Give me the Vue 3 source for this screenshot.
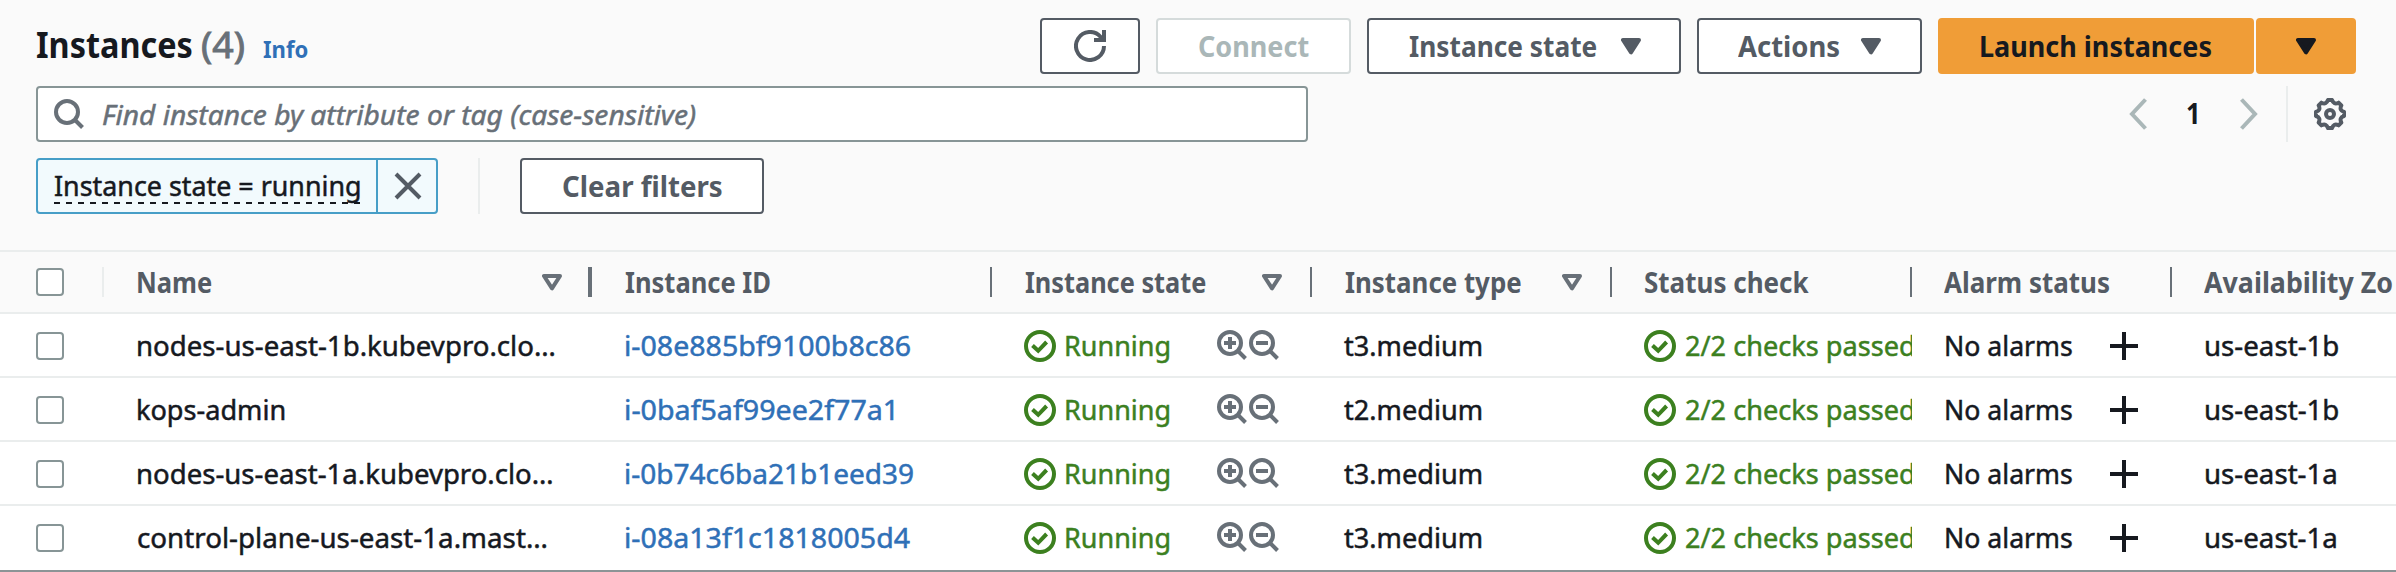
<script setup>
// Fits a label to a given ink width by condensing it horizontally.
const vFit = {
  mounted(el, { value }) {
    const cs = getComputedStyle(el)
    const ctx = document.createElement('canvas').getContext('2d')
    ctx.font = `${cs.fontStyle} ${cs.fontWeight} ${cs.fontSize} ${cs.fontFamily}`
    const m = ctx.measureText(el.textContent)
    const scale = value / (m.actualBoundingBoxRight + m.actualBoundingBoxLeft)
    const bearing = -m.actualBoundingBoxLeft * scale
    el.style.transform = `scaleX(${scale})`
    el.style.marginLeft = `${-bearing}px`
    el.style.marginRight = `${value - m.width + bearing}px`
  },
}

const columns = [
  { key: 'name', label: 'Name', width: 73.8, filter: true, active: true },
  { key: 'id', label: 'Instance ID', width: 144.5 },
  { key: 'state', label: 'Instance state', width: 180.7, filter: true },
  { key: 'type', label: 'Instance type', width: 176, filter: true },
  { key: 'status', label: 'Status check', width: 164.3 },
  { key: 'alarm', label: 'Alarm status', width: 165 },
  { key: 'zone', label: 'Availability Zo', width: 188.5, last: true },
]

const rows = [
  { name: 'nodes-us-east-1b.kubevpro.clo…', nw: 416.7, id: 'i-08e885bf9100b8c86', iw: 284, type: 't3.medium', zone: 'us-east-1b', zw: 132.2 },
  { name: 'kops-admin', nw: 147, id: 'i-0baf5af99ee2f77a1', iw: 267, type: 't2.medium', zone: 'us-east-1b', zw: 132.2 },
  { name: 'nodes-us-east-1a.kubevpro.clo…', nw: 414.5, id: 'i-0b74c6ba21b1eed39', iw: 287, type: 't3.medium', zone: 'us-east-1a', zw: 130.2 },
  { name: 'control-plane-us-east-1a.mast…', nw: 408.7, id: 'i-08a13f1c1818005d4', iw: 284, type: 't3.medium', zone: 'us-east-1a', zw: 130.2 },
]

const polar = (r, deg) => {
  const a = (deg * Math.PI) / 180
  return `${(16 + r * Math.cos(a)).toFixed(2)} ${(16 + r * Math.sin(a)).toFixed(2)}`
}
let gear = `M${polar(14.2, -8)}`
for (let k = 0; k < 8; k++) {
  const a = k * 45
  gear += ` L${polar(14.2, a + 8)} Q${polar(9.6, a + 22.5)} ${polar(14.2, a + 37)}`
}
gear += 'Z'
</script>

<template>
  <div class="panel">
    <header class="top">
      <div class="title-row">
        <h1 class="title"><span v-fit="155" class="t">Instances</span><span v-fit="42" class="t count">(4)</span></h1>
        <a class="info"><span v-fit="44.4" class="t">Info</span></a>
        <div class="actions">
          <button class="btn refresh">
            <svg width="32" height="32" viewBox="0 0 32 32"><path d="M30 16A14 14 0 1 1 26.5 6.7L28 10" /><path d="M30 0V10H20" /></svg>
          </button>
          <button class="btn connect"><span v-fit="110" class="t">Connect</span></button>
          <button class="btn state">
            <span v-fit="187.6" class="t">Instance state</span>
            <svg class="caret" width="20" height="17" viewBox="0 0 20 17"><path d="M2 2H18L10 14.4Z" /></svg>
          </button>
          <button class="btn acts">
            <span v-fit="101" class="t">Actions</span>
            <svg class="caret" width="20" height="17" viewBox="0 0 20 17"><path d="M2 2H18L10 14.4Z" /></svg>
          </button>
          <button class="btn primary launch"><span v-fit="230" class="t">Launch instances</span></button>
          <button class="btn primary more">
            <svg class="caret" width="20" height="17" viewBox="0 0 20 17"><path d="M2 2H18L10 14.4Z" /></svg>
          </button>
        </div>
      </div>

      <div class="search-row">
        <div class="search">
          <svg width="30" height="30" viewBox="0 0 30 30"><circle cx="13" cy="13" r="11" /><path d="M20.5 20.5L28.5 28.5" /></svg>
          <span v-fit="592" class="t">Find instance by attribute or tag (case-sensitive)</span>
        </div>
        <div class="pager">
          <svg width="18" height="32" viewBox="0 0 18 32"><path d="M16.5 1.5L3 16L16.5 30.5" /></svg>
          <span v-fit="10" class="t page">1</span>
          <svg width="18" height="32" viewBox="0 0 18 32"><path d="M1.5 1.5L15 16L1.5 30.5" /></svg>
          <i class="rule"></i>
          <svg class="gear" width="32" height="32" viewBox="0 0 32 32"><path :d="gear" /><circle cx="16" cy="16" r="4" /></svg>
        </div>
      </div>

      <div class="filter-row">
        <div class="token">
          <div class="token-label">
            <span v-fit="304.5" class="t">Instance state = running</span>
            <svg class="dashes" width="306" height="2" viewBox="0 0 306 2"><path d="M0 1H306" /></svg>
          </div>
          <div class="token-close"><svg width="28" height="28" viewBox="0 0 28 28"><path d="M2 2L26 26M26 2L2 26" /></svg></div>
        </div>
        <i class="rule"></i>
        <button class="btn clear"><span v-fit="158.7" class="t">Clear filters</span></button>
      </div>
    </header>

    <div class="grid head">
      <div class="cell select"><i class="box"></i><i class="rule short"></i></div>
      <div v-for="c in columns" :key="c.key" class="cell" :class="c.key">
        <span v-fit="c.width" class="t">{{ c.label }}</span>
        <span class="tools">
          <svg v-if="c.filter" width="20" height="17" viewBox="0 0 20 17"><path d="M2 2H18L10 14.4Z" /></svg>
          <i v-if="!c.last" class="divider" :class="{ active: c.active }"></i>
        </span>
      </div>
    </div>

    <div v-for="r in rows" :key="r.id" class="grid row">
      <div class="cell select"><i class="box"></i></div>
      <div class="cell name"><span v-fit="r.nw" class="t">{{ r.name }}</span></div>
      <div class="cell id"><a v-fit="r.iw" class="t">{{ r.id }}</a></div>
      <div class="cell state ok">
        <svg class="check" width="32" height="32" viewBox="0 0 32 32"><circle cx="16" cy="16" r="14" /><path d="M8.5 15.5L14.2 20.8L22.6 12" /></svg>
        <span v-fit="103" class="t">Running</span>
        <svg class="lens" width="62" height="30" viewBox="0 0 62 30">
          <circle cx="13" cy="13" r="11" /><path d="M20.5 20.5L28.5 28.5M7 13H19M13 7V19" />
          <circle cx="45" cy="13" r="11" /><path d="M52.5 20.5L60.5 28.5M39 13H51" />
        </svg>
      </div>
      <div class="cell type"><span v-fit="137" class="t">{{ r.type }}</span></div>
      <div class="cell status ok">
        <svg class="check" width="32" height="32" viewBox="0 0 32 32"><circle cx="16" cy="16" r="14" /><path d="M8.5 15.5L14.2 20.8L22.6 12" /></svg>
        <span v-fit="227.5" class="t">2/2 checks passed</span>
      </div>
      <div class="cell alarm">
        <span v-fit="126.5" class="t">No alarms</span>
        <svg class="plus" width="28" height="28" viewBox="0 0 28 28"><path d="M14 0V28M0 14H28" /></svg>
      </div>
      <div class="cell zone"><span v-fit="r.zw" class="t">{{ r.zone }}</span></div>
    </div>
  </div>
</template>

<style>
body {
  background: #8c9496;
  overflow: hidden;
}
</style>

<style scoped>
.panel {
  width: 2396px;
  height: 570px;
  overflow: hidden;
  background: #fff;
  color: #16191f;
  font: 400 28px/40px "Noto Sans", "Open Sans", sans-serif;
}
.panel * { box-sizing: border-box; }
.t {
  display: inline-block;
  flex: none;
  white-space: pre;
  transform-origin: 0 0;
}
.row .t, .search .t, .token .t { -webkit-text-stroke: 0.5px currentColor; }
svg {
  display: block;
  flex: none;
  fill: none;
  stroke: currentColor;
  stroke-width: 4;
}

.top {
  height: 250px;
  padding: 18px 40px 0 36px;
  background: #fafafa;
}
.title-row, .actions, .search-row, .pager, .filter-row { display: flex; }
.title-row { height: 56px; }
.title {
  display: flex;
  margin: 0;
  padding: 0 0 0 1px;
  font-size: 36px;
  line-height: 53px;
  gap: 10.3px;
}
.count { color: #687078; font-weight: 400; -webkit-text-stroke: 0.9px #687078; }
.info {
  display: flex;
  margin-left: 18.5px;
  color: #2f70b7;
  font-size: 24px;
  font-weight: 700;
  line-height: 61px;
}
.actions { margin-left: auto; }
.btn {
  display: flex;
  align-items: center;
  flex: none;
  height: 56px;
  padding: 0;
  border: 2px solid #545b64;
  border-radius: 4px;
  background: #fff;
  color: #545b64;
  font: inherit;
  font-weight: 700;
  margin-right: 16px;
}
.btn .t { margin-top: -1px; }
.caret { fill: currentColor; stroke-linejoin: round; }
.refresh { width: 100px; padding-left: 32px; }
.connect { width: 195px; padding-left: 40.5px; border-color: #d5dbdb; color: #aab7b8; }
.state.btn { width: 314px; padding-left: 40.4px; gap: 24px; }
.acts { width: 225px; padding-left: 39px; gap: 22.3px; }
.primary { border-color: #f09d37; background: #f09d37; color: #16191f; }
.launch { width: 316px; padding-left: 41px; margin-right: 2px; }
.more { width: 100px; padding-left: 38px; margin-right: 0; }

.search-row { margin-top: 12px; height: 56px; justify-content: space-between; }
.search {
  display: flex;
  align-items: center;
  width: 1272px;
  height: 56px;
  padding-left: 16px;
  gap: 18.6px;
  border: 2px solid #879596;
  border-radius: 4px;
  background: #fff;
  color: #687078;
  font-style: italic;
}
.pager { align-items: center; margin-right: 10px; color: #aab7b8; }
.page { color: #16191f; font-weight: 700; }
.pager .t { position: relative; left: 40px; top: -1px; }
.pager svg:nth-of-type(2) { margin-left: 83px; }
.rule { flex: none; width: 2px; height: 56px; background: #eaeded; }
.pager .rule { margin-left: 28px; }
.gear { margin-left: 26px; color: #545b64; stroke-linejoin: round; }

.filter-row { margin-top: 16px; height: 56px; }
.token {
  display: flex;
  width: 402px;
  border: 2px solid #479ec7;
  border-radius: 4px;
  background: #f2fafd;
}
.token-label {
  display: flex;
  flex-direction: column;
  align-items: flex-start;
  width: 340px;
  padding: 5px 0 0 16px;
  border-right: 2px solid #479ec7;
}
.token-label .t { position: relative; left: 0.5px; }
.dashes { margin-top: -3px; stroke-width: 2; stroke-dasharray: 6 6; }
.token-close { padding: 12px 0 0 16px; color: #545b64; }
.filter-row .rule { margin: 0 40px; }
.clear { width: 244px; padding-left: 41px; }

.grid {
  display: grid;
  grid-template-columns: 104px 488px 400px 320px 300px 300px 260px 224px;
  height: 64px;
  border-bottom: 2px solid #eaeded;
}
.head {
  background: #fafafa;
  border-top: 2px solid #eaeded;
  color: #545b64;
  font-weight: 700;
}
.cell { display: flex; align-items: center; min-width: 0; overflow: hidden; }
.select { padding-left: 36px; justify-content: space-between; }
.box {
  width: 28px;
  height: 28px;
  border: 2px solid #879596;
  border-radius: 4px;
  background: #fff;
}
.short { height: 30px; }
.row .box { margin-top: 2px; }
.row:last-child { border-bottom: 0; padding-bottom: 2px; }
.row .name, .row .id { padding-left: 33.6px; }
.head .t { margin-top: -1px; }
.head .name { padding-left: 33.7px; }
.head .id, .head .state { padding-left: 32.5px; }
.head .type { padding-left: 32.6px; }
.head .status { padding-left: 32.8px; }
.head .zone { padding-left: 32px; }
.head .alarm { padding-left: 32.4px; }
.tools { display: flex; align-items: center; margin-left: auto; color: #687078; }
.tools svg { margin-right: 28px; stroke-linejoin: round; }
.divider { width: 2px; height: 30px; background: #687078; }
.name .tools svg { margin-right: 26px; }
.divider.active { width: 4px; }
.id a { color: #2f70b7; }
.row .state, .row .status { padding-left: 32px; gap: 9.6px; }
.ok { color: #3c801f; }
.check { margin-top: 2px; }
.lens { margin-left: 38.6px; color: #687078; }
.row .type { padding-left: 32.3px; }
.row .alarm { padding-left: 33.4px; gap: 38px; }
.plus { margin-top: 2px; }
.row .zone { padding-left: 33.8px; }
</style>
